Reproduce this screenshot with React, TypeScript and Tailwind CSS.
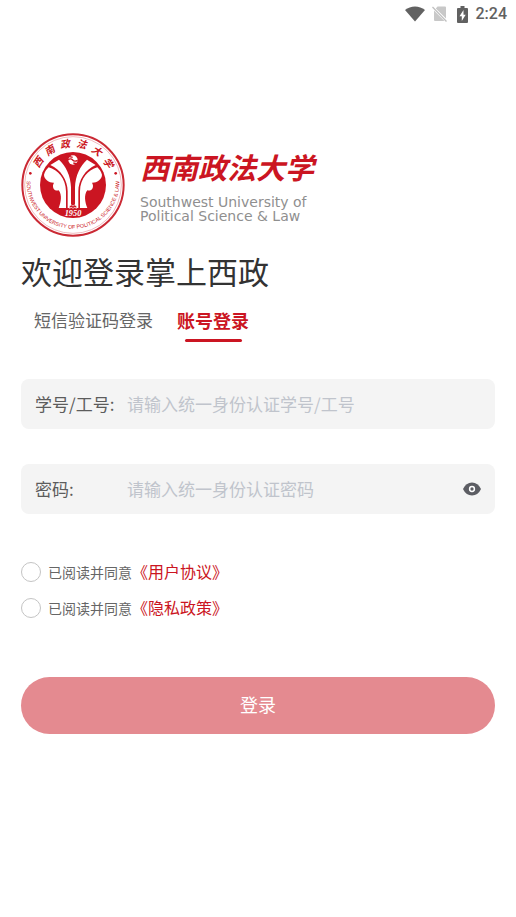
import { useState } from "react";

const AGREEMENTS = [
  { id: "terms", title: "《用户协议》" },
  { id: "privacy", title: "《隐私政策》" },
];

const SEAL_CHARS = ["西", "南", "政", "法", "大", "学"];

function StatusBar() {
  return (
    <header className="flex h-7 items-center justify-end pr-[9px] text-[#616161]">
      <svg className="mr-[7px] h-4 w-5" viewBox="0 0 20 16" fill="currentColor" aria-hidden="true">
        <path d="M10 15.500 0 4Q4.400.5 10 .5T20 4Z" />
      </svg>
      <svg className="mr-[10px] h-4 w-[15px]" viewBox="0 0 15 16" aria-hidden="true">
        <path d="M5.500.5H13q1 0 1 1v11L3.800 2.400ZM2 4.600 12.500 15H3q-1 0-1-1Z" fill="#c8c8c8" />
        <path d="m.5 1 14 14.500" stroke="#c0c0c0" strokeWidth="1.300" />
      </svg>
      <svg className="mr-2 h-[17px] w-[11px]" viewBox="0 0 11 17" aria-hidden="true">
        <path
          d="M3.500 0h4v2H10q1 0 1 1v13q0 1-1 1H1q-1 0-1-1V3q0-1 1-1h2.500Z"
          fill="currentColor"
        />
        <path d="M6.500 4 2.500 10.300h2.300V15l3.900-6.300H6.500Z" fill="#fff" />
      </svg>
      <span className="font-['Roboto',sans-serif] text-base font-medium">2:24</span>
    </header>
  );
}

function PetalHalf() {
  return (
    <>
      <path d="M105 118 131 102C151 120 166 150 167 185V240L170 247H157V197C157 164 136 131 105 118Z" />
      <path d="M100 125C127 132 151 158 152 197V247H130C137 230 141 208 130 194 117 198 108 184 116 171 103 172 86 161 86 147 89 137 94 130 100 125Z" />
    </>
  );
}

function Emblem() {
  return (
    <svg className="size-[104px] shrink-0" viewBox="17 22 312 312" role="img" aria-label="校徽">
      <defs>
        <path id="seal-ring" d="M34 170A139 139 0 0 0 312 170" />
      </defs>
      <circle cx="173" cy="178" r="152" fill="#fff" stroke="#cb2a35" strokeWidth="6" />
      <circle cx="173" cy="178" r="145" fill="none" stroke="#e0777e" strokeWidth="1.500" />
      <circle cx="173" cy="178" r="99" fill="#cb1522" />
      <g
        fill="#cb1522"
        fontFamily="'Noto Sans CJK SC', sans-serif"
        fontSize="30"
        fontStyle="italic"
        fontWeight="700"
        textAnchor="middle"
      >
        {SEAL_CHARS.map((char, i) => (
          <text key={char} x="173" y="64" transform={`rotate(${-57 + i * 23} 173 178)`}>
            {char}
          </text>
        ))}
      </g>
      <circle cx="45" cy="143" r="4" fill="#cb1522" />
      <circle cx="301" cy="143" r="4" fill="#cb1522" />
      <text fill="#cb1522" fontFamily="'Liberation Sans', sans-serif" fontSize="16" fontWeight="400">
        <textPath href="#seal-ring" startOffset="50%" textAnchor="middle">
          SOUTHWEST UNIVERSITY OF POLITICAL SCIENCE &amp; LAW
        </textPath>
      </text>
      <g fill="#fff">
        <PetalHalf />
        <g transform="translate(346 0) scale(-1 1)">
          <PetalHalf />
        </g>
        <circle cx="173" cy="103" r="14" />
      </g>
      <path
        d="M158 102q9-5 14 1t15 1M160 92l12 3M174 112l12 3"
        fill="none"
        stroke="#cb1522"
        strokeWidth="4"
      />
      <path
        d="M162 248v-6q6-8 11-1 5-7 11 1v6q-6-5-11 0-5-5-11 0Z"
        fill="#cb1522"
        stroke="#fff"
        strokeWidth="2"
      />
      <text
        x="173"
        y="271"
        fill="#fff"
        fontFamily="'Liberation Serif', serif"
        fontSize="25"
        fontStyle="italic"
        fontWeight="700"
        textAnchor="middle"
      >
        1950
      </text>
    </svg>
  );
}

function Logo() {
  return (
    <div className="flex gap-[15px]">
      <Emblem />
      <div className="pt-[10px]">
        <p className="text-[29px] leading-[46px] font-bold whitespace-nowrap text-[#cb1522] italic">
          西南政法大学
        </p>
        <p className="pt-[6px] font-['DejaVu_Sans',sans-serif] text-sm leading-[14px] whitespace-nowrap text-[#8f8f8f]">
          Southwest University of
          <br />
          Political Science &amp; Law
        </p>
      </div>
    </div>
  );
}

function EyeIcon() {
  return (
    <svg className="h-[14px] w-[18px]" viewBox="0 0 18 14" aria-hidden="true">
      <path d="M0 7Q3 .5 9 .5T18 7Q15 13.500 9 13.500T0 7Z" fill="#5c5d63" />
      <circle cx="9" cy="7" r="2.400" fill="#5c5d63" stroke="#fff" strokeWidth="1.500" />
    </svg>
  );
}

const fieldClass = "flex h-[50px] items-center rounded-lg bg-[#f4f4f4] px-[14px]";
const labelClass = "w-[92px] shrink-0 text-[17px] text-[#5c5c5c]";
const inputClass =
  "min-w-0 flex-1 bg-transparent text-[17px] text-[#333] outline-none placeholder:text-[#c0c4cc]";

export default function App() {
  const [tab, setTab] = useState<"sms" | "account">("account");
  const [showPassword, setShowPassword] = useState(false);

  const tabClass = (active: boolean) =>
    active
      ? "flex flex-col items-center gap-[6px] text-lg leading-[26px] font-bold text-[#cb1522]"
      : "flex flex-col items-center gap-[6px] text-[17px] leading-[26px] text-[#666]";

  return (
    <div className="min-h-screen bg-white font-['Noto_Sans_CJK_SC',sans-serif]">
      <StatusBar />
      <main className="px-[21px] pt-[105px]">
        <Logo />
        <h1 className="mt-[14px] text-[31px] leading-10 text-[#333]">欢迎登录掌上西政</h1>

        <div className="mt-4 flex gap-6 pl-[13px]">
          <button type="button" className={tabClass(tab === "sms")} onClick={() => setTab("sms")}>
            短信验证码登录
            {tab === "sms" && <span className="h-[3px] w-[57px] rounded-full bg-[#cb1522]" />}
          </button>
          <button
            type="button"
            className={tabClass(tab === "account")}
            onClick={() => setTab("account")}
          >
            账号登录
            {tab === "account" && <span className="h-[3px] w-[57px] rounded-full bg-[#cb1522]" />}
          </button>
        </div>

        <form className="mt-[37px]" onSubmit={(e) => e.preventDefault()}>
          <div className={fieldClass}>
            <label htmlFor="account" className={labelClass}>
              学号/工号:
            </label>
            <input id="account" className={inputClass} placeholder="请输入统一身份认证学号/工号" />
          </div>
          <div className={`${fieldClass} mt-[35px]`}>
            <label htmlFor="password" className={labelClass}>
              密码:
            </label>
            <input
              id="password"
              type={showPassword ? "text" : "password"}
              className={inputClass}
              placeholder="请输入统一身份认证密码"
            />
            <button
              type="button"
              aria-label="显示密码"
              onClick={() => setShowPassword((prev) => !prev)}
            >
              <EyeIcon />
            </button>
          </div>

          <div className="mt-12 flex flex-col gap-4">
            {AGREEMENTS.map((item) => (
              <div key={item.id} className="flex h-5 items-center">
                <input
                  id={item.id}
                  type="checkbox"
                  className="size-5 appearance-none rounded-full border border-[#c4c4c4] checked:border-[#cb1522] checked:bg-[#cb1522]"
                />
                <label htmlFor={item.id} className="pb-px pl-[7px] text-sm text-[#666]">
                  已阅读并同意
                </label>
                <a href={`#${item.id}`} className="pb-[2px] text-base text-[#cb1522]">
                  {item.title}
                </a>
              </div>
            ))}
          </div>

          <button
            type="submit"
            className="mt-[59px] h-[57px] w-full rounded-full bg-[#e48a90] pb-[3px] text-lg text-white"
          >
            登录
          </button>
        </form>
      </main>
    </div>
  );
}
